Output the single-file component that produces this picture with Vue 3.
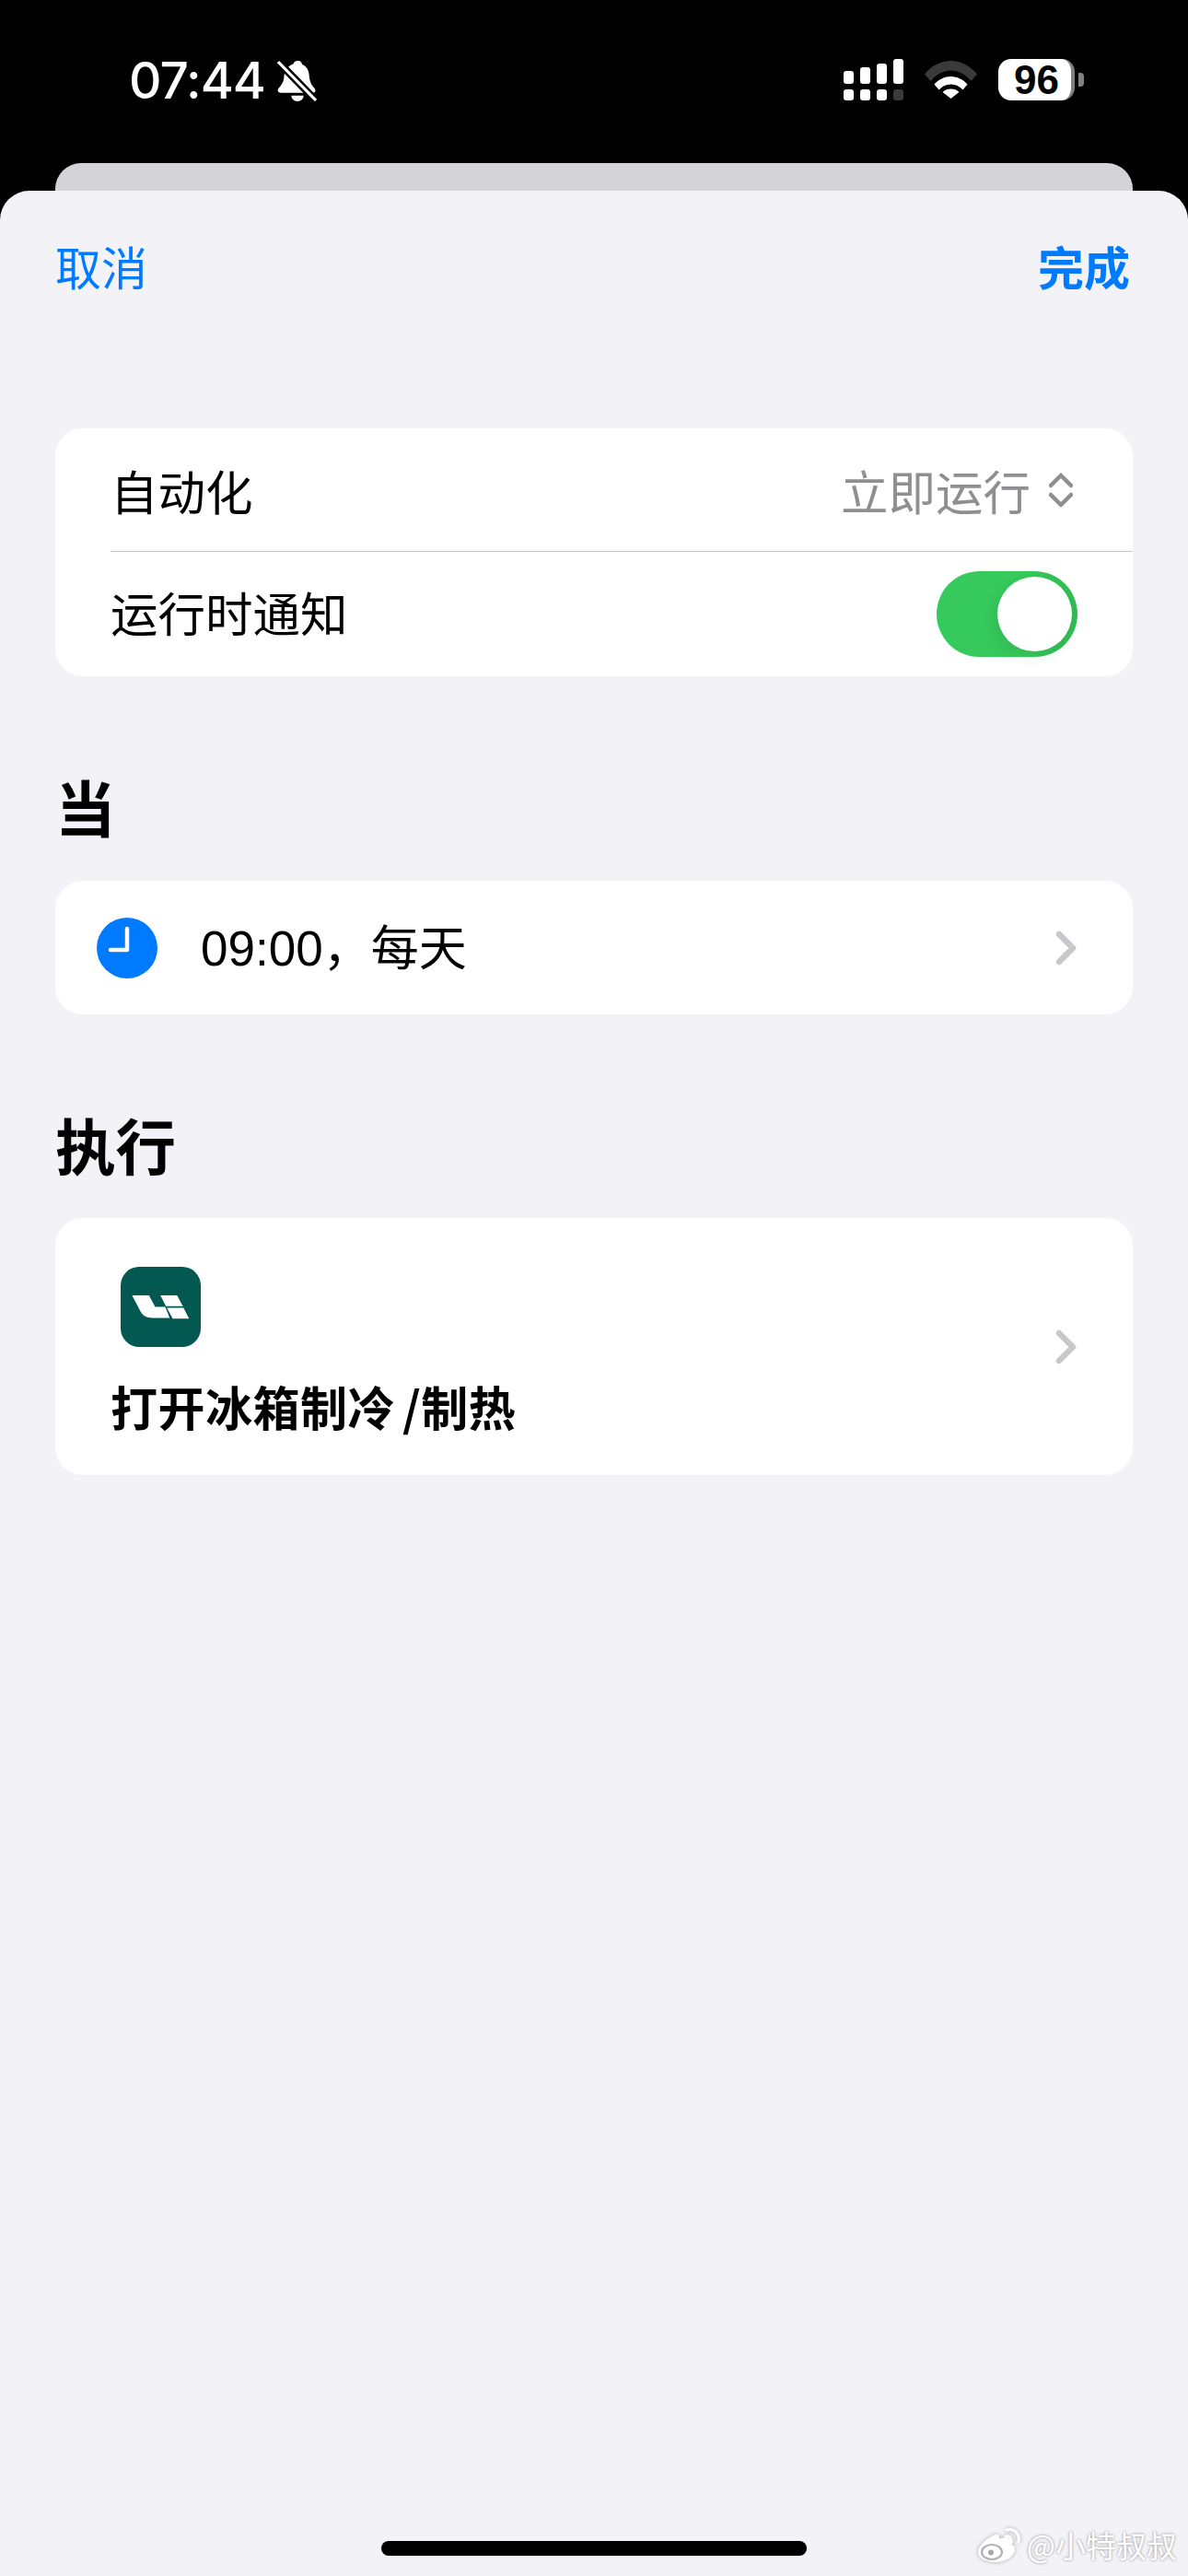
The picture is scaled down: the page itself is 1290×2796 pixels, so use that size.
<script setup>
const signalTop = [13, 9, 5, 0]
const signalBottom = ['#fff', '#fff', '#fff', '#3a3a3a']
</script>

<template>
  <div class="page">
    <div class="status">
      <div class="status-left">
        <span class="time">07:44</span>
        <svg class="bell" viewBox="0 0 42 44" width="43" height="45">
          <path d="M22 1c3 0 4 2 4.500 4 5 2 7 6 7.500 12 .5 6 2 9 5.500 13 2 2.500 1 5-2 5H4c-3 0-4.500-2.500-2.500-5 3-3.500 5-6 5.500-10 .5-8 3-13 10-15.500C17.500 2.500 19 1 22 1z" fill="#fff"/>
          <path d="M15 38h13c0 3.500-3 6-6.500 6S15 41.500 15 38z" fill="#fff"/>
          <path d="M1 2l40 41" stroke="#000" stroke-width="8" fill="none"/>
          <path d="M1 2l40 41" stroke="#fff" stroke-width="3" fill="none"/>
        </svg>
      </div>
      <div class="status-right">
        <div class="signal">
          <div class="signal-row signal-row--top">
            <i v-for="(h, n) in signalTop" :key="n" :style="{ marginTop: h + 'px' }"></i>
          </div>
          <div class="signal-row signal-row--bottom">
            <i v-for="(c, n) in signalBottom" :key="n" :style="{ background: c }"></i>
          </div>
        </div>
        <svg class="wifi" viewBox="0 0 57 41" width="57" height="41">
          <path d="M0 14.500C7.500 5.500 17.500 0 28.500 0S49.500 5.500 57 14.500l-6.500 7.500C44.500 15 37 10.500 28.500 10.500S12.500 15 6.500 22z" fill="#3a3a3a"/>
          <path d="M10.500 25.500C15 20.500 21.500 17 28.500 17s13.500 3.500 18 8.500l-5 6C38 27.500 33.500 25.500 28.500 25.500S19 27.500 15.500 31.500z" fill="#fff"/>
          <path d="M19.500 34c2.500-2.500 5.500-3.500 9-3.500s6.500 1 9 3.500l-9 7z" fill="#fff"/>
        </svg>
        <div class="battery">
          <div class="battery-body">96</div>
          <div class="battery-cap"></div>
        </div>
      </div>
    </div>

    <div class="back-sheet"></div>

    <div class="sheet">
      <div class="nav">
        <span class="nav-btn">取消</span>
        <span class="nav-btn nav-btn--done">完成</span>
      </div>

      <div class="card card--settings">
        <div class="row row--auto">
          <span class="row-label">自动化</span>
          <span class="row-value">立即运行</span>
          <svg class="updown" viewBox="0 0 26 38" width="26" height="38">
            <path d="M2 14L13 3l11 11M2 24l11 11 11-11" fill="none" stroke="#8e8e93" stroke-width="4.500" stroke-linecap="round" stroke-linejoin="round"/>
          </svg>
        </div>
        <div class="divider"></div>
        <div class="row row--notify">
          <span class="row-label">运行时通知</span>
          <div class="switch"><div class="knob"></div></div>
        </div>
      </div>

      <div class="section-title section-title--when">当</div>
      <div class="card card--when">
        <svg class="clock" viewBox="0 0 66 66" width="66" height="66">
          <circle cx="33" cy="33" r="33" fill="#007aff"/>
          <path d="M33 12v23H15" fill="none" stroke="#fff" stroke-width="4.500" stroke-linecap="round" stroke-linejoin="round"/>
        </svg>
        <span class="when-text"><span class="when-time">09:00</span>，每天</span>
        <svg class="chevron" viewBox="0 0 24 38" width="24" height="38">
          <path d="M4 4l15 15L4 34" fill="none" stroke="#c7c7cc" stroke-width="6.500" stroke-linecap="round" stroke-linejoin="round"/>
        </svg>
      </div>

      <div class="section-title section-title--do">执行</div>
      <div class="card card--do">
        <div class="do-main">
          <svg class="app-icon" viewBox="93 75 260 260" width="87" height="87">
            <rect x="93" y="75" width="260" height="260" rx="60" fill="#035951"/>
            <path d="M130 168h55l20 37h33l14 36h-57c-17 0-29-6-37-20z" fill="#fff"/>
            <path d="M222 168h54l19 35h-55z" fill="#fff"/>
            <path d="M243 208h54l18 35h-53z" fill="#fff"/>
          </svg>
          <div class="do-text">打开冰箱制冷 /制热</div>
        </div>
        <svg class="chevron chevron--do" viewBox="0 0 24 38" width="24" height="38">
          <path d="M4 4l15 15L4 34" fill="none" stroke="#c7c7cc" stroke-width="6.500" stroke-linecap="round" stroke-linejoin="round"/>
        </svg>
      </div>

      <div class="home-bar"></div>

      <div class="watermark">
        <svg class="weibo" viewBox="0 0 46 38" width="46" height="38">
          <path d="M19 8C10 11 0 20 0 27c0 7 9 11 19 11s21-6 21-14c0-4-3-5-5-6 1-4-1-7-5-7-3 0-5 1-7 2 1-4-1-6-4-5z" fill="#fff"/>
          <ellipse cx="15" cy="27" rx="11" ry="8" fill="#fff" stroke="#b0b0b5" stroke-width="2.200"/>
          <circle cx="14" cy="27.500" r="3" fill="#a8a8ad"/>
          <path d="M30 10c4-1 7 2 6 7M31 3c8-2 15 4 13 13" fill="none" stroke="#fff" stroke-width="3" stroke-linecap="round"/>
        </svg>
        <span class="watermark-text">@小特叔叔</span>
      </div>
    </div>
  </div>
</template>

<style>
html, body {
  margin: 0;
  background: #000;
}
</style>

<style scoped>
.page {
  width: 1290px;
  height: 2796px;
  background: #000;
  display: flex;
  flex-direction: column;
  overflow: hidden;
  font-family: "Noto Sans CJK SC", "Liberation Sans", sans-serif;
}

.status {
  height: 177px;
  flex: none;
  display: flex;
  justify-content: space-between;
  align-items: flex-start;
  padding: 64px 113px 0 140px;
  box-sizing: border-box;
}
.status-left {
  display: flex;
  align-items: center;
  gap: 13px;
}
.time {
  font-family: Inter, "Liberation Sans", sans-serif;
  font-size: 55px;
  font-weight: 500;
  line-height: 46px;
  color: #fff;
  letter-spacing: -1px;
}
.bell {
  display: block;
}
.status-right {
  display: flex;
  align-items: flex-start;
  gap: 23px;
}
.signal {
  display: flex;
  flex-direction: column;
  gap: 6px;
}
.signal-row {
  display: flex;
  gap: 7px;
}
.signal-row i {
  display: block;
  width: 11px;
  border-radius: 3px;
  background: #fff;
}
.signal-row--top {
  height: 27px;
}
.signal-row--bottom {
  height: 12px;
}
.wifi {
  display: block;
  margin-top: 2px;
}
.battery {
  display: flex;
  align-items: center;
  gap: 4px;
}
.battery-body {
  width: 83px;
  height: 45px;
  box-sizing: border-box;
  padding-left: 4px;
  border-radius: 14px;
  background: #fff;
  border-right: 4px solid #808080;
  color: #000;
  font-family: "Liberation Sans", sans-serif;
  font-size: 44px;
  font-weight: 700;
  line-height: 45px;
  text-align: center;
}
.battery-cap {
  width: 6px;
  height: 15px;
  background: #808080;
  border-radius: 0 4px 4px 0;
}

.back-sheet {
  flex: none;
  height: 30px;
  margin: 0 60px;
  background: #d4d3d8;
  border-radius: 28px 28px 0 0;
}

.sheet {
  flex: 1;
  position: relative;
  background: #f2f2f7;
  border-radius: 32px 32px 0 0;
  padding: 0 60px;
}

.nav {
  display: flex;
  justify-content: space-between;
  padding-top: 48px;
  height: 148px;
  box-sizing: border-box;
}
.nav-btn {
  font-size: 50px;
  line-height: 66px;
  color: #007aff;
}
.nav-btn--done {
  font-weight: 700;
  margin-right: 3px;
}

.card {
  background: #fff;
  border-radius: 30px;
  width: 1170px;
}
.card--settings {
  margin-top: 110px;
  height: 269px;
}
.row {
  display: flex;
  align-items: center;
  padding-left: 60px;
}
.row--auto {
  height: 133px;
}
.row--notify {
  height: 135px;
}
.row-label {
  font-size: 51.500px;
  color: #000;
  line-height: 66px;
}
.row--notify .row-label {
  margin-bottom: 6px;
}
.row-value {
  margin-left: auto;
  font-size: 51.500px;
  color: #8e8e93;
  line-height: 66px;
}
.updown {
  display: block;
  margin: 0 65px 0 20px;
}
.divider {
  height: 1px;
  margin-left: 60px;
  background: #c6c6c8;
}
.switch {
  position: relative;
  margin-left: auto;
  margin-right: 60px;
  width: 153px;
  height: 93px;
  border-radius: 47px;
  background: linear-gradient(90deg, #36c95c 65%, #31bb53);
}
.knob {
  position: absolute;
  top: 6px;
  right: 6px;
  width: 81px;
  height: 81px;
  border-radius: 50%;
  background: #fff;
  box-shadow: -4px 6px 16px rgba(0, 0, 0, 0.08);
}

.section-title {
  font-size: 65.500px;
  font-weight: 700;
  color: #000;
  line-height: 84px;
  margin-top: 99px;
  margin-bottom: 38px;
}
.section-title--when {
  margin-bottom: 39px;
}

.card--when {
  height: 145px;
  display: flex;
  align-items: center;
  padding-left: 45px;
  box-sizing: border-box;
}
.clock {
  display: block;
  flex: none;
}
.when-text {
  margin-left: 47px;
  margin-bottom: 2px;
  font-size: 52px;
  line-height: 66px;
  color: #000;
}
.when-time {
  font-family: "Liberation Sans", sans-serif;
  font-size: 53px;
}
.chevron {
  display: block;
  flex: none;
  margin-left: auto;
  margin-right: 60px;
}
.chevron--do {
  margin-bottom: 8px;
}

.card--do {
  height: 279px;
  display: flex;
  align-items: center;
  box-sizing: border-box;
  padding-left: 60px;
  padding-top: 8px;
}
.do-main {
  display: flex;
  flex-direction: column;
  align-items: flex-start;
}
.app-icon {
  display: block;
  margin-left: 11px;
}
.do-text {
  margin-top: 34px;
  font-size: 51px;
  font-weight: 700;
  line-height: 60px;
  color: #000;
  letter-spacing: 0.500px;
  word-spacing: -4px;
}

.home-bar {
  position: absolute;
  left: 414px;
  bottom: 22px;
  width: 462px;
  height: 16px;
  border-radius: 8px;
  background: #000;
}

.watermark {
  position: absolute;
  right: 12px;
  bottom: 14px;
  display: flex;
  align-items: center;
  gap: 7px;
}
.weibo {
  display: block;
  filter: drop-shadow(0 0 2px rgba(0, 0, 0, 0.3));
}
.watermark-text {
  font-size: 33px;
  line-height: 40px;
  color: #fff;
  text-shadow: 0 0 3px rgba(0, 0, 0, 0.45);
}
</style>
